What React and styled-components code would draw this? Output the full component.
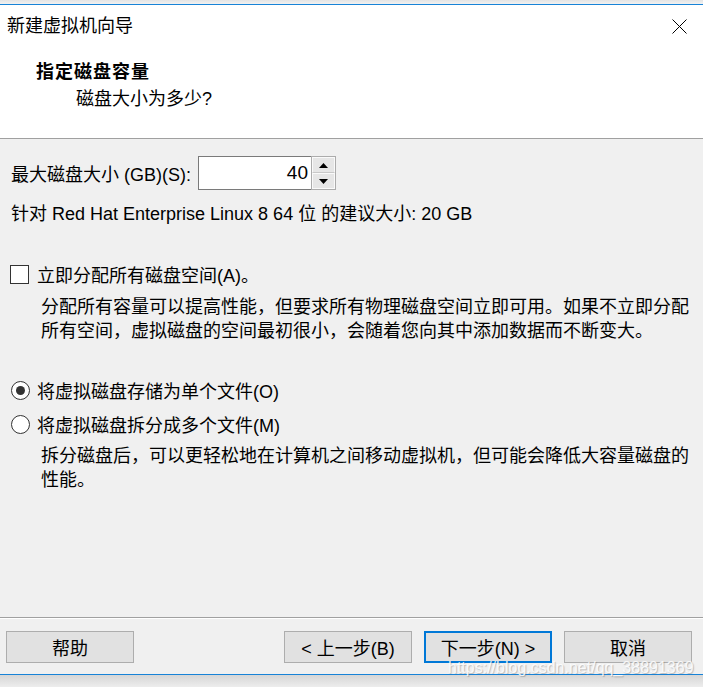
import React from "react";
import styled, { createGlobalStyle } from "styled-components";

const FONT = `"Liberation Sans", "Noto Sans CJK SC", sans-serif`;

const GlobalStyle = createGlobalStyle`
  html, body {
    margin: 0;
    padding: 0;
    background: #f0f0f0;
  }
  body {
    font-family: ${FONT};
    color: #000;
  }
`;

const Window = styled.div`
  position: relative;
  width: 703px;
  height: 687px;
  display: flex;
  flex-direction: column;
  background: #f0f0f0;
  overflow: hidden;
  font-family: ${FONT};
  font-size: 18px;
`;

const TopEdge = styled.div`
  height: 4px;
  background: linear-gradient(#e4e4e4, #f2f2f2);
  border-bottom: 1px solid #1883d7;
  flex-shrink: 0;
`;

const Header = styled.div`
  background: #fff;
  border-bottom: 1px solid #a0a0a0;
  flex-shrink: 0;
`;

const TitleBar = styled.div`
  height: 42px;
  display: flex;
  align-items: center;
  justify-content: space-between;
  padding: 0 16px 0 7px;
`;

const Title = styled.span`
  font-size: 18px;
  line-height: 24px;
`;

const CloseButton = styled.span`
  display: flex;
  width: 15px;
  height: 15px;
`;

const WizardHead = styled.div`
  height: 91px;
  box-sizing: border-box;
  padding: 13px 0 0 36px;
`;

const Heading = styled.div`
  font-weight: 700;
  line-height: 24px;
  letter-spacing: 1px;
`;

const SubHeading = styled.div`
  line-height: 30px;
  margin-left: 40px;
`;

const Body = styled.div`
  height: 478px;
  box-sizing: border-box;
  padding: 17px 11px 0 11px;
  display: flex;
  flex-direction: column;
  flex-shrink: 0;
`;

const SizeRow = styled.div`
  display: flex;
  align-items: center;
  height: 34px;
`;

const Label = styled.span`
  width: 187px;
  line-height: 24px;
  padding-top: 3px;
`;

const SpinBox = styled.div`
  display: flex;
  height: 34px;
`;

const NumberField = styled.div`
  width: 113px;
  box-sizing: border-box;
  border: 1px solid #7a7a7a;
  border-right: none;
  background: #fff;
  display: flex;
  align-items: center;
  justify-content: flex-end;
  padding-right: 3px;
  font-size: 19px;
`;

const Spinner = styled.div`
  width: 25px;
  box-sizing: border-box;
  border: 1px solid #acacac;
  background: #f0f0f0;
  display: flex;
  flex-direction: column;
`;

const SpinButton = styled.div`
  flex: 1;
  display: flex;
  align-items: center;
  justify-content: center;
  background: #e6e6e6;
  border: 1px solid #fafafa;
  border-bottom-color: ${(p) => (p.$up ? "#c8c8c8" : "#fafafa")};
`;

const TextLine = styled.div`
  line-height: 24px;
  margin-top: ${(p) => p.$top || 0}px;
`;

const OptionRow = styled.label`
  display: flex;
  align-items: center;
  height: 24px;
  margin-top: ${(p) => p.$top || 0}px;
  gap: ${(p) => p.$gap || 8}px;
`;

const CheckBox = styled.span`
  width: 19px;
  height: 19px;
  box-sizing: border-box;
  border: 1px solid #333;
  background: #fff;
  margin-left: -1px;
`;

const Radio = styled.span`
  width: 19px;
  height: 19px;
  box-sizing: border-box;
  border-radius: 50%;
  border: 1px solid #333;
  background: #fff;
  display: flex;
  align-items: center;
  justify-content: center;
  &::after {
    content: "";
    width: 9px;
    height: 9px;
    border-radius: 50%;
    background: ${(p) => (p.$checked ? "#333" : "transparent")};
  }
`;

const Description = styled.div`
  margin: ${(p) => p.$top || 0}px 0 0 30px;
  line-height: 24px;
`;

const Footer = styled.div`
  height: 58px;
  box-sizing: border-box;
  border-top: 1px solid #a0a0a0;
  box-shadow: inset 0 1px 0 #ffffff;
  border-bottom: 1px solid #1883d7;
  padding: 13px 11px 0 6px;
  display: flex;
  gap: 12px;
  flex-shrink: 0;
`;

const Spacer = styled.div`
  flex: 1;
`;

const Button = styled.button`
  width: 128px;
  height: 32px;
  box-sizing: border-box;
  background: #e1e1e1;
  border: ${(p) => (p.$primary ? "2px solid #0078d7" : "1px solid #adadad")};
  font-family: ${FONT};
  font-size: 18px;
  color: #000;
  padding: 0;
  display: flex;
  align-items: center;
  justify-content: center;
`;

const Shadow = styled.div`
  flex: 1;
  background: linear-gradient(#d6d6d6, #ededed);
`;

/* csdn watermark laid over the footer */
const Watermark = styled.span`
  position: absolute;
  left: 448px;
  top: 659px;
  font-family: "Liberation Sans", sans-serif;
  font-size: 16px;
  line-height: 18px;
  color: rgba(255, 255, 255, 0.85);
  text-shadow: 1px 1px 1px rgba(90, 90, 90, 0.35);
  pointer-events: none;
  white-space: nowrap;
`;

function CloseIcon() {
  return (
    <svg width="15" height="15" viewBox="0 0 15 15">
      <path d="M0.5 0.5 L14.5 14.5 M14.5 0.5 L0.5 14.5" stroke="#000" strokeWidth="1" />
    </svg>
  );
}

function Arrow({ up }) {
  return (
    <svg width="9" height="5" viewBox="0 0 9 5">
      <path d={up ? "M0 5 L4.5 0 L9 5 Z" : "M0 0 L9 0 L4.5 5 Z"} fill="#000" />
    </svg>
  );
}

export default function App() {
  return (
    <Window>
      <GlobalStyle />
      <TopEdge />
      <Header>
        <TitleBar>
          <Title>新建虚拟机向导</Title>
          <CloseButton>
            <CloseIcon />
          </CloseButton>
        </TitleBar>
        <WizardHead>
          <Heading>指定磁盘容量</Heading>
          <SubHeading>磁盘大小为多少?</SubHeading>
        </WizardHead>
      </Header>

      <Body>
        <SizeRow>
          <Label>最大磁盘大小 (GB)(S):</Label>
          <SpinBox>
            <NumberField>40</NumberField>
            <Spinner>
              <SpinButton $up>
                <Arrow up />
              </SpinButton>
              <SpinButton>
                <Arrow />
              </SpinButton>
            </Spinner>
          </SpinBox>
        </SizeRow>

        <TextLine $top={12}>针对 Red Hat Enterprise Linux 8 64 位 的建议大小: 20 GB</TextLine>

        <OptionRow $top={36} $gap={8}>
          <CheckBox />
          <span>立即分配所有磁盘空间(A)。</span>
        </OptionRow>
        <Description $top={9}>
          分配所有容量可以提高性能，但要求所有物理磁盘空间立即可用。如果不立即分配
          <br />
          所有空间，虚拟磁盘的空间最初很小，会随着您向其中添加数据而不断变大。
        </Description>

        <OptionRow $top={35} $gap={7}>
          <Radio $checked />
          <span>将虚拟磁盘存储为单个文件(O)</span>
        </OptionRow>
        <OptionRow $top={10} $gap={7}>
          <Radio />
          <span>将虚拟磁盘拆分成多个文件(M)</span>
        </OptionRow>
        <Description $top={8}>
          拆分磁盘后，可以更轻松地在计算机之间移动虚拟机，但可能会降低大容量磁盘的
          <br />
          性能。
        </Description>
      </Body>

      <Footer>
        <Button>帮助</Button>
        <Spacer />
        <Button>&lt; 上一步(B)</Button>
        <Button $primary>下一步(N) &gt;</Button>
        <Button>取消</Button>
      </Footer>
      <Shadow />
      <Watermark>https://blog.csdn.net/qq_38891369</Watermark>
    </Window>
  );
}
